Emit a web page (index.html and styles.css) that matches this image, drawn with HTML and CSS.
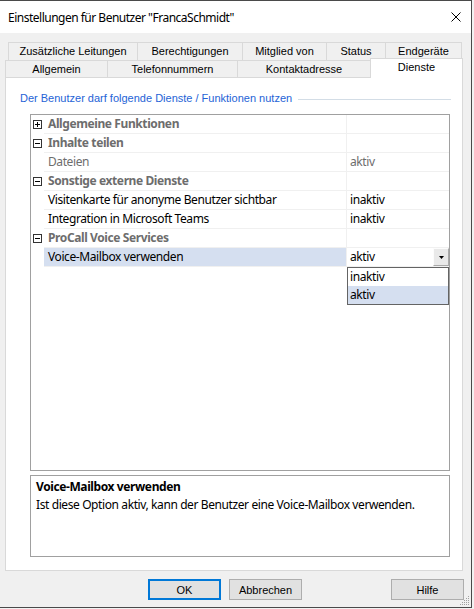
FILE: index.html
```html
<!DOCTYPE html>
<html lang="de">
<head>
<meta charset="utf-8">
<title>Einstellungen</title>
<link rel="stylesheet" href="styles.css">
</head>
<body>
<div class="dialog">
  <div class="titlebar">
    <span class="title">Einstellungen für Benutzer "FrancaSchmidt"</span>
    <svg class="close" width="10" height="10" viewBox="0 0 10 10"><path d="M0.5 0.5 L9.5 9.5 M9.5 0.5 L0.5 9.5" stroke="#000" stroke-width="1" fill="none"/></svg>
  </div>
  <div class="content">
    <div class="tabs">
      <div class="tabrow row1">
        <div class="tab t-zus">Zusätzliche Leitungen</div>
        <div class="tab t-ber">Berechtigungen</div>
        <div class="tab t-mit">Mitglied von</div>
        <div class="tab t-sta">Status</div>
        <div class="tab t-end">Endgeräte</div>
      </div>
      <div class="tabrow row2">
        <div class="tab t-all">Allgemein</div>
        <div class="tab t-tel">Telefonnummern</div>
        <div class="tab t-kon">Kontaktadresse</div>
        <div class="tab t-die selected">Dienste</div>
      </div>
    </div>
    <div class="panel">
      <div class="group-head">
        <span class="group-label">Der Benutzer darf folgende Dienste / Funktionen nutzen</span>
        <span class="group-rule"></span>
      </div>
      <div class="grid">
        <div class="row category">
          <div class="gutter"><span class="exp plus"></span></div>
          <div class="name">Allgemeine Funktionen</div>
          <div class="value"></div>
        </div>
        <div class="row category">
          <div class="gutter"><span class="exp"></span></div>
          <div class="name">Inhalte teilen</div>
          <div class="value"></div>
        </div>
        <div class="row disabled">
          <div class="gutter"></div>
          <div class="name">Dateien</div>
          <div class="value">aktiv</div>
        </div>
        <div class="row category">
          <div class="gutter"><span class="exp"></span></div>
          <div class="name">Sonstige externe Dienste</div>
          <div class="value"></div>
        </div>
        <div class="row">
          <div class="gutter"></div>
          <div class="name">Visitenkarte für anonyme Benutzer sichtbar</div>
          <div class="value">inaktiv</div>
        </div>
        <div class="row">
          <div class="gutter"></div>
          <div class="name">Integration in Microsoft Teams</div>
          <div class="value">inaktiv</div>
        </div>
        <div class="row category">
          <div class="gutter"><span class="exp"></span></div>
          <div class="name">ProCall Voice Services</div>
          <div class="value"></div>
        </div>
        <div class="row selected">
          <div class="gutter"></div>
          <div class="name">Voice-Mailbox verwenden</div>
          <div class="value editor">
            <span class="editor-text">aktiv</span>
            <span class="drop-btn"><svg width="5" height="3" viewBox="0 0 5 3"><path d="M0 0 H5 L2.5 3 Z" fill="#000"/></svg></span>
          </div>
        </div>
        <div class="droplist">
          <div class="item">inaktiv</div>
          <div class="item hot">aktiv</div>
        </div>
      </div>
      <div class="desc">
        <div class="desc-title">Voice-Mailbox verwenden</div>
        <div class="desc-text">Ist diese Option aktiv, kann der Benutzer eine Voice-Mailbox verwenden.</div>
      </div>
    </div>
    <div class="buttons">
      <button class="btn default">OK</button>
      <button class="btn">Abbrechen</button>
      <button class="btn help">Hilfe</button>
    </div>
    <svg class="grip" width="11" height="11" viewBox="0 0 11 11">
      <g fill="#a0a0a0">
        <rect x="9" y="1" width="1" height="1"/>
        <rect x="7" y="3" width="1" height="1"/><rect x="9" y="3" width="1" height="1"/>
        <rect x="5" y="5" width="1" height="1"/><rect x="7" y="5" width="1" height="1"/><rect x="9" y="5" width="1" height="1"/>
        <rect x="3" y="7" width="1" height="1"/><rect x="5" y="7" width="1" height="1"/><rect x="7" y="7" width="1" height="1"/><rect x="9" y="7" width="1" height="1"/>
        <rect x="1" y="9" width="1" height="1"/><rect x="3" y="9" width="1" height="1"/><rect x="5" y="9" width="1" height="1"/><rect x="7" y="9" width="1" height="1"/><rect x="9" y="9" width="1" height="1"/>
      </g>
    </svg>
  </div>
</div>
</body>
</html>
```

FILE: styles.css
```css
html, body {
  margin: 0;
  padding: 0;
}
body {
  width: 474px;
  height: 609px;
  overflow: hidden;
  background: #f2f2f2;
  font-family: "Liberation Sans", Arial, sans-serif;
  font-size: 11px;
  color: #000;
}
.dialog {
  box-sizing: border-box;
  width: 472px;
  height: 608px;
  border-top: 1px solid #4a4a4a;
  border-right: 1px solid #4a4a4a;
  border-bottom: 1px solid #4a4a4a;
  background: #f0f0f0;
  display: flex;
  flex-direction: column;
}
.titlebar {
  height: 32px;
  flex: none;
  background: #fff;
  display: flex;
  align-items: center;
  padding-left: 8px;
  padding-right: 10px;
}
.title {
  font-family: "Noto Sans", sans-serif;
  font-size: 12px;
  letter-spacing: -0.5px;
  flex: 1;
}
.close {
  margin-bottom: 0;
}
.content {
  flex: 1;
  display: flex;
  flex-direction: column;
  position: relative;
}
.tabs {
  padding-top: 9px;
}
.tabrow {
  display: flex;
  align-items: flex-start;
}
.row1 {
  padding-left: 8px;
  height: 18px;
}
.row2 {
  padding-left: 5px;
  height: 17px;
}
.tab {
  box-sizing: border-box;
  border: 1px solid #d9d9d9;
  border-bottom: none;
  margin-right: -1px;
  background: #f0f0f0;
  text-align: center;
  white-space: nowrap;
}
.row1 .tab {
  height: 18px;
  line-height: 16px;
}
.row2 .tab {
  height: 17px;
  line-height: 17px;
}
.t-zus { width: 130px; }
.t-ber { width: 106px; }
.t-mit { width: 85px; }
.t-sta { width: 60px; }
.t-end { width: 77px; }
.t-all { width: 103px; }
.t-tel { width: 131px; }
.t-kon { width: 134px; }
.row2 .t-die {
  width: 93px;
  height: 20px;
  margin-top: -2px;
  line-height: 16px;
  background: #fff;
  position: relative;
  z-index: 1;
}
.panel {
  box-sizing: border-box;
  margin-left: 5px;
  width: 458px;
  height: 494px;
  border: 1px solid #d9d9d9;
  background: #fff;
  padding: 14px 0 0 24px;
}
.group-head {
  display: flex;
  align-items: center;
  height: 13px;
  margin-left: -10px;
  padding-right: 11px;
}
.group-label {
  color: #2563d6;
  line-height: 13px;
  white-space: nowrap;
}
.group-rule {
  flex: 1;
  height: 1px;
  margin-left: 6px;
  margin-top: 2px;
  background: #d3dde6;
}
.grid {
  box-sizing: border-box;
  margin-top: 9px;
  width: 420px;
  height: 357px;
  border: 1px solid #a0a0a0;
  position: relative;
  font-family: "Noto Sans", sans-serif;
  font-size: 12px;
  letter-spacing: -0.4px;
}
.row {
  display: flex;
  height: 19px;
}
.gutter {
  width: 13px;
  flex: none;
  display: flex;
  align-items: center;
  padding-left: 2px;
  box-sizing: border-box;
}
.exp {
  box-sizing: border-box;
  width: 9px;
  height: 9px;
  border: 1px solid #333;
  position: relative;
  margin-top: -1px;
}
.exp::before {
  content: "";
  position: absolute;
  left: 1px;
  top: 3px;
  width: 5px;
  height: 1px;
  background: #000;
}
.exp.plus::after {
  content: "";
  position: absolute;
  left: 3px;
  top: 1px;
  width: 1px;
  height: 5px;
  background: #000;
}
.name {
  width: 302px;
  flex: none;
  box-sizing: border-box;
  border-bottom: 1px solid #f0f0f0;
  padding-left: 4px;
  line-height: 18px;
  white-space: nowrap;
  overflow: hidden;
}
.value {
  flex: 1;
  box-sizing: border-box;
  border-bottom: 1px solid #f0f0f0;
  border-left: 1px solid #f0f0f0;
  padding-left: 3px;
  line-height: 18px;
  white-space: nowrap;
}
.category .name {
  font-weight: bold;
  color: #6d6d6d;
}
.disabled .name,
.disabled .value {
  color: #6d6d6d;
}
.selected .name {
  background: #d5dff0;
}
.editor {
  display: flex;
  align-items: flex-start;
  padding-right: 0;
}
.editor-text {
  flex: 1;
}
.drop-btn {
  box-sizing: border-box;
  width: 16px;
  height: 18px;
  background: #e9e9e9;
  border-top: 1px solid #fcfcfc;
  border-left: 1px solid #fcfcfc;
  border-right: 1px solid #a9a9a9;
  border-bottom: 1px solid #a9a9a9;
  display: flex;
  align-items: center;
  justify-content: center;
}
.droplist {
  position: absolute;
  left: 316px;
  top: 152px;
  width: 102px;
  box-sizing: border-box;
  border: 1px solid #646464;
  background: #fff;
}
.item {
  height: 18px;
  line-height: 18px;
  padding-left: 2px;
}
.item.hot {
  background: #d5dff0;
}
.desc {
  box-sizing: border-box;
  margin-top: 4px;
  width: 420px;
  height: 82px;
  border: 1px solid #a0a0a0;
  padding: 2px 5px;
  font-family: "Noto Sans", sans-serif;
  font-size: 12px;
  letter-spacing: -0.4px;
  line-height: 18px;
}
.desc-title {
  font-weight: bold;
}
.buttons {
  display: flex;
  gap: 8px;
  padding-left: 148px;
  padding-right: 7px;
  margin-top: 8px;
}
.btn {
  box-sizing: border-box;
  width: 73px;
  height: 21px;
  margin: 0;
  padding: 0;
  background: #e1e1e1;
  border: 1px solid #adadad;
  font-family: "Liberation Sans", Arial, sans-serif;
  font-size: 11px;
  color: #000;
}
.btn.default {
  border: 2px solid #0078d7;
}
.btn.help {
  margin-left: auto;
}
.grip {
  position: absolute;
  right: 1px;
  bottom: 1px;
}
```
